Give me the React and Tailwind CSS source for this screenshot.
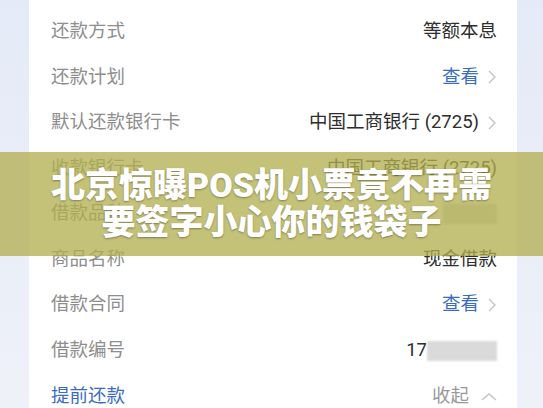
const FONT = { fontFamily: 'Roboto, "Noto Sans CJK SC", sans-serif' };

function Chevron() {
  return (
    <svg width="10" height="16" viewBox="0 0 10 16" className="ml-[8px] shrink-0">
      <polyline points="2,2 8,8 2,14" fill="none" stroke="#c4c4c4" strokeWidth="1.4" />
    </svg>
  );
}

function ChevronUp() {
  return (
    <svg width="16" height="10" viewBox="0 0 16 10" className="ml-[12px] shrink-0">
      <polyline points="1,8 8,2 15,8" fill="none" stroke="#c4c4c4" strokeWidth="1.4" />
    </svg>
  );
}

const rows = [
  { label: "还款方式", value: "等额本息" },
  { label: "还款计划", value: "查看", link: true, arrow: true },
  { label: "默认还款银行卡", value: "中国工商银行 (2725)", arrow: true },
  { label: "收款银行卡", value: "中国工商银行 (2725)" },
  { label: "借款品种", blur: "w-[54px]" },
  { label: "商品名称", value: "现金借款" },
  { label: "借款合同", value: "查看", link: true, arrow: true },
  { label: "借款编号", value: "17", blur: "w-[70px]" },
];

function Row({ label, value, link, arrow, blur }) {
  return (
    <div className="flex h-[45.6px] items-center justify-between">
      <span className="text-[18.5px] text-[#8e8e8e]">{label}</span>
      <div className="flex items-center">
        {value && (
          <span className={`text-[18.5px] ${link ? "text-[#3a6cc4]" : "text-[#2e2e2e]"}`}>{value}</span>
        )}
        {blur && <span className={`h-[20px] ${blur} bg-[#dadada] blur-[1px]`} />}
        {arrow && <Chevron />}
      </div>
    </div>
  );
}

export default function App() {
  return (
    <div className="relative h-[408px] w-[543px] overflow-hidden bg-gradient-to-b from-[#e5eaf8] to-[#eef1f8]" style={FONT}>
      <div className="ml-[29px] h-full w-[488px] bg-white pl-[22px] pr-[20px] pt-[9px]">
        {rows.map((r) => (
          <Row key={r.label} {...r} />
        ))}
        <div className="flex h-[45.6px] items-center justify-between">
          <span className="text-[18.5px] text-[#3a6cc4]">提前还款</span>
          <div className="flex items-center">
            <span className="text-[18.5px] text-[#9a9a9a]">收起</span>
            <ChevronUp />
          </div>
        </div>
      </div>

      <div className="absolute inset-x-0 top-[152px] flex h-[104px] flex-col items-center justify-center bg-[rgba(178,174,78,0.76)]">
        <p className="text-[34px] font-black leading-[37px] text-white [text-shadow:0_1px_2px_rgba(0,0,0,0.35)]">
          北京惊曝POS机小票竟不再需
        </p>
        <p className="text-[34px] font-black leading-[37px] text-white [text-shadow:0_1px_2px_rgba(0,0,0,0.35)]">
          要签字小心你的钱袋子
        </p>
      </div>
    </div>
  );
}
